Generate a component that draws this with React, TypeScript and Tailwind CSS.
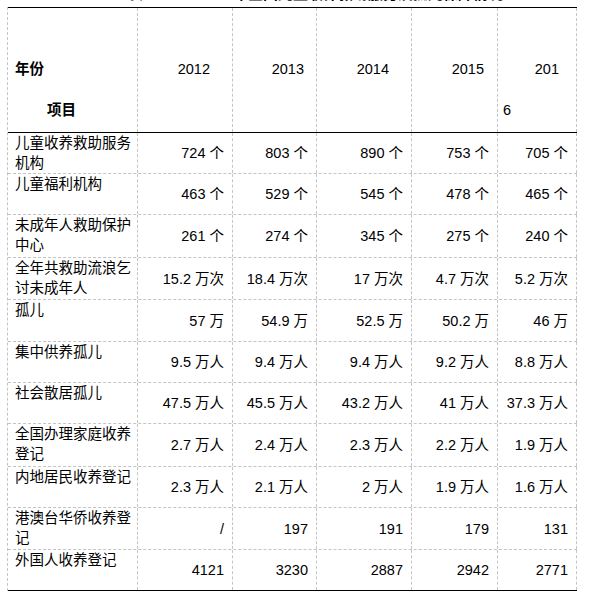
const years = [
  { label: '2012', pr: 'pr-[22px]' },
  { label: '2013', pr: 'pr-[12px]' },
  { label: '2014', pr: 'pr-[22px]' },
  { label: '2015', pr: 'pr-[13px]' },
];

const rows: { name: string; h: string; values: string[] }[] = [
  { name: '儿童收养救助服务机构', h: 'h-[41px]', values: ['724 个', '803 个', '890 个', '753 个', '705 个'] },
  { name: '儿童福利机构', h: 'h-[41px]', values: ['463 个', '529 个', '545 个', '478 个', '465 个'] },
  { name: '未成年人救助保护中心', h: 'h-[43px]', values: ['261 个', '274 个', '345 个', '275 个', '240 个'] },
  { name: '全年共救助流浪乞讨未成年人', h: 'h-[42px]', values: ['15.2 万次', '18.4 万次', '17 万次', '4.7 万次', '5.2 万次'] },
  { name: '孤儿', h: 'h-[42px]', values: ['57 万', '54.9 万', '52.5 万', '50.2 万', '46 万'] },
  { name: '集中供养孤儿', h: 'h-[41px]', values: ['9.5 万人', '9.4 万人', '9.4 万人', '9.2 万人', '8.8 万人'] },
  { name: '社会散居孤儿', h: 'h-[41px]', values: ['47.5 万人', '45.5 万人', '43.2 万人', '41 万人', '37.3 万人'] },
  { name: '全国办理家庭收养登记', h: 'h-[43px]', values: ['2.7 万人', '2.4 万人', '2.3 万人', '2.2 万人', '1.9 万人'] },
  { name: '内地居民收养登记', h: 'h-[41px]', values: ['2.3 万人', '2.1 万人', '2 万人', '1.9 万人', '1.6 万人'] },
  { name: '港澳台华侨收养登记', h: 'h-[42px]', values: ['/', '197', '191', '179', '131'] },
  { name: '外国人收养登记', h: 'h-[40px]', values: ['4121', '3230', '2887', '2942', '2771'] },
];

const cols = 'grid grid-cols-[130px_95px_84px_95px_86px_79px]';
const vline = 'border-r border-dashed border-[#c4c4c4]';

export default function App() {
  return (
    <div className="min-h-[597px] w-[592px] bg-white text-black font-['Liberation_Sans','Noto_Sans_CJK_SC',sans-serif] text-[14.5px] leading-[20px]">
      <div className="h-[7px] overflow-hidden pl-[128px]">
        <div className="-mt-[15px] text-[15px] font-bold leading-[18px] whitespace-nowrap">
          表 2012—2016 年全国儿童收养救助服务及孤儿保障情况
        </div>
      </div>

      <div className="ml-[7px] w-[570px] border-l border-dashed border-[#c4c4c4]">
        {/* header */}
        <div className={`${cols} h-[126px] border-y border-solid border-black`}>
          <div className={`${vline} pt-[51px] pl-[7px] font-bold`}>
            <div>年份</div>
            <div className="mt-[21px] pl-[32px]">项目</div>
          </div>
          {years.map((y) => (
            <div key={y.label} className={`${vline} pt-[51px] ${y.pr} text-right`}>
              {y.label}
            </div>
          ))}
          <div className={`${vline} pt-[51px]`}>
            <div className="pr-[17px] text-right">201</div>
            <div className="mt-[21px] pl-[5px]">6</div>
          </div>
        </div>

        {/* body */}
        <div className="border-b border-solid border-black">
          {rows.map((row, i) => (
            <div
              key={row.name}
              className={`${cols} ${row.h} ${
                i < rows.length - 1 ? 'border-b border-dashed border-[#c4c4c4]' : ''
              }`}
            >
              <div className={`${vline} pl-[7px] pr-[4px]`}>{row.name}</div>
              {row.values.map((v, j) => (
                <div key={j} className={`${vline} flex items-center justify-end pr-[8px] whitespace-nowrap`}>
                  {v}
                </div>
              ))}
            </div>
          ))}
        </div>
      </div>
    </div>
  );
}
